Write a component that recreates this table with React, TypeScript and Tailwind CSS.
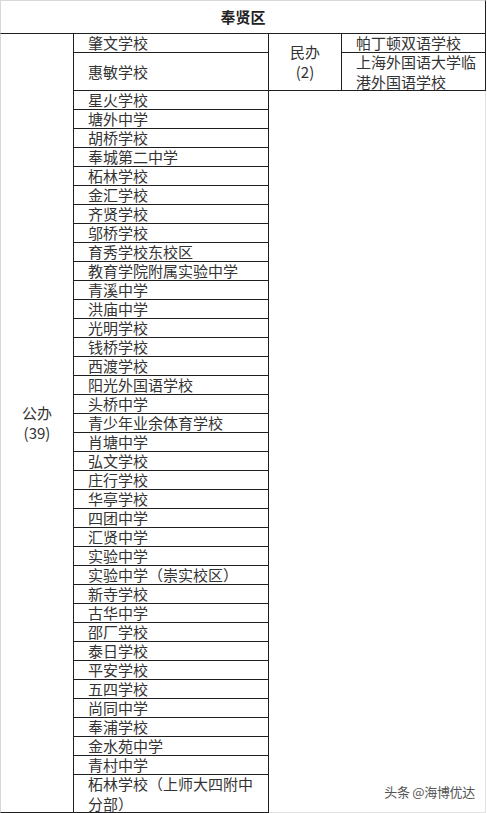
const publicSchools: { name: string; tall?: boolean; lines?: string[] }[] = [
  { name: "肇文学校" },
  { name: "惠敏学校", tall: true },
  { name: "星火学校" },
  { name: "塘外中学" },
  { name: "胡桥学校" },
  { name: "奉城第二中学" },
  { name: "柘林学校" },
  { name: "金汇学校" },
  { name: "齐贤学校" },
  { name: "邬桥学校" },
  { name: "育秀学校东校区" },
  { name: "教育学院附属实验中学" },
  { name: "青溪中学" },
  { name: "洪庙中学" },
  { name: "光明学校" },
  { name: "钱桥学校" },
  { name: "西渡学校" },
  { name: "阳光外国语学校" },
  { name: "头桥中学" },
  { name: "青少年业余体育学校" },
  { name: "肖塘中学" },
  { name: "弘文学校" },
  { name: "庄行学校" },
  { name: "华亭学校" },
  { name: "四团中学" },
  { name: "汇贤中学" },
  { name: "实验中学" },
  { name: "实验中学（崇实校区）" },
  { name: "新寺学校" },
  { name: "古华中学" },
  { name: "邵厂学校" },
  { name: "泰日学校" },
  { name: "平安学校" },
  { name: "五四学校" },
  { name: "尚同中学" },
  { name: "奉浦学校" },
  { name: "金水苑中学" },
  { name: "青村中学" },
  { name: "柘林学校（上师大四附中分部）", tall: true, lines: ["柘林学校（上师大四附中", "分部）"] },
];

export default function App() {
  return (
    <div
      className="relative h-[813px] w-[487px] overflow-hidden bg-white text-[15px] text-[#333]"
      style={{ fontFamily: '"Noto Sans CJK SC", "Noto Sans", sans-serif' }}
    >
      {/* title row */}
      <div className="flex h-[34px] w-[486px] items-center justify-center border border-[#d8d8d8] border-r-[#1f1f1f] border-b-[#1f1f1f] text-[15px] font-bold text-[#222]">
        奉贤区
      </div>

      <div className="flex h-[779px] w-[486px]">
        {/* 公办 */}
        <div className="flex w-[74px] shrink-0 flex-col items-center justify-center border-b border-l border-r border-[#d8d8d8] border-r-[#1f1f1f] border-b-[#1f1f1f] leading-[20px]">
          <span>公办</span>
          <span>(39)</span>
        </div>

        {/* public school list */}
        <div className="flex w-[195px] shrink-0 flex-col border-r border-[#1f1f1f]">
          {publicSchools.map((s) => (
            <div
              key={s.name}
              className={`flex items-center border-b border-[#1f1f1f] pl-[14px] ${s.tall ? "h-[38px] leading-[20px]" : "h-[19px] leading-[18px]"}`}
            >
              {s.lines ? (
                <span>
                  {s.lines[0]}
                  <br />
                  {s.lines[1]}
                </span>
              ) : (
                <span className="whitespace-nowrap">{s.name}</span>
              )}
            </div>
          ))}
        </div>

        {/* 民办 */}
        <div className="flex w-[217px] shrink-0 flex-col">
          <div className="flex h-[57px]">
            <div className="flex w-[73px] shrink-0 flex-col items-center justify-center border-b border-r border-[#1f1f1f] leading-[20px]">
              <span>民办</span>
              <span>(2)</span>
            </div>
            <div className="flex w-[144px] shrink-0 flex-col border-r border-[#1f1f1f]">
              <div className="flex h-[19px] items-center border-b border-[#1f1f1f] pl-[14px] leading-[18px]">
                帕丁顿双语学校
              </div>
              <div className="flex h-[38px] items-center border-b border-[#1f1f1f] pl-[14px] leading-[20px]">
                <span>
                  上海外国语大学临
                  <br />
                  港外国语学校
                </span>
              </div>
            </div>
          </div>
          <div className="flex-1 border-b border-r border-[#e2e2e2]" />
        </div>
      </div>

      {/* watermark */}
      <div className="absolute bottom-[13px] right-[12px] text-[13px] leading-[16px] tracking-[-0.3px] text-[#555]">
        头条 @海博优达
      </div>
    </div>
  );
}
